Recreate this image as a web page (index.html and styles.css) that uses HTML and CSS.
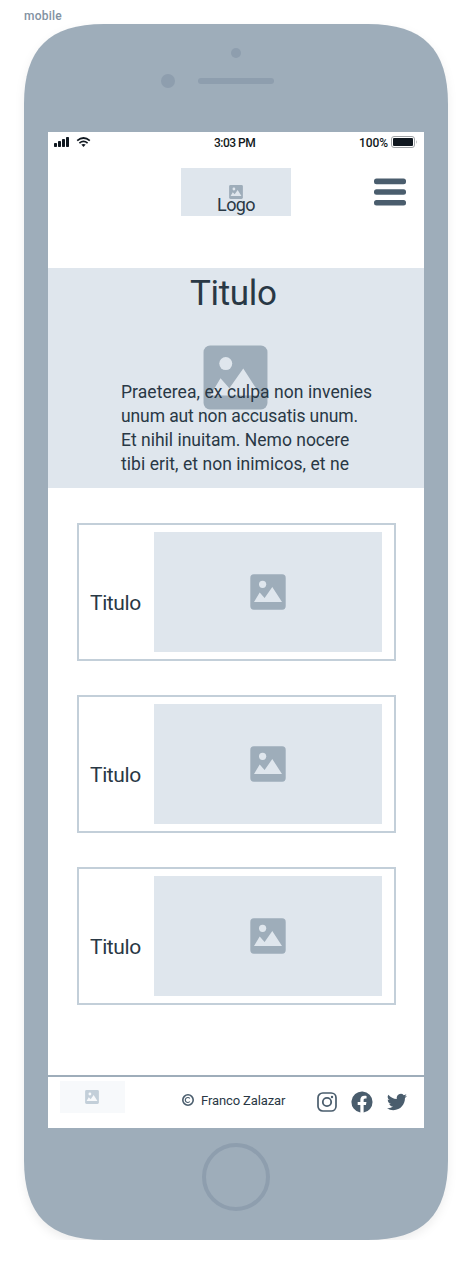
FILE: index.html
```
<!DOCTYPE html>
<html lang="es">
<head>
<meta charset="utf-8">
<title>mobile</title>
<link rel="stylesheet" href="styles.css">
</head>
<body>
<svg class="defs" width="0" height="0" aria-hidden="true">
  <symbol id="picture" viewBox="0 0 36 36">
    <rect x=".3" y=".3" width="35.4" height="35.4" rx="3.6" fill="currentColor"/>
    <circle cx="12.6" cy="10.3" r="3.6" class="cut"/>
    <path d="M4 28 9.7 18.4 14.6 24 22.3 13 32 28Z" class="cut"/>
  </symbol>
</svg>
<div class="caption">mobile</div>
<div class="phone">
  <svg class="shell" viewBox="0 0 424 1216"><path d="M0 80C0 25 25 0 80 0H344C399 0 424 25 424 80V1136C424 1191 399 1216 344 1216H80C25 1216 0 1191 0 1136Z" fill="#9eadba"/></svg>
  <div class="top">
    <svg width="424" height="108" fill="#8e9eae"><circle cx="212" cy="29" r="5"/><circle cx="144" cy="57" r="7"/><rect x="174" y="54" width="76" height="6" rx="3"/></svg>
  </div>
  <main class="screen">
    <div class="status">
      <svg class="signal" width="38" height="12" fill="#101820">
        <rect x="0" y="6" width="3" height="4" rx=".7"/><rect x="4" y="4" width="3" height="6" rx=".7"/><rect x="8" y="2" width="3" height="8" rx=".7"/><rect x="12" y="0" width="3" height="10" rx=".7"/>
        <g fill="none" stroke="#101820" stroke-width="1.7"><path d="M23.2 3.7Q29.5-1.7 35.8 3.7M25.4 6.1Q29.5 2.7 33.6 6.1"/></g><path d="M27.3 7.6Q29.5 6.2 31.7 7.6L29.5 10Z"/>
      </svg>
      <span class="time">3:03 PM</span>
      <span class="power"><span class="pct">100%</span><svg width="27" height="12"><rect x=".5" y=".5" width="23" height="11" rx="2.5" fill="none" stroke="#9fa3a6"/><rect x="2" y="2" width="20" height="8" rx="1" fill="#101820"/><path d="M25 4Q26.5 6 25 8Z" fill="#9fa3a6"/></svg></span>
    </div>
    <header class="header">
      <div class="logo"><svg width="14" height="14"><use href="#picture"/></svg><span>Logo</span></div>
      <svg class="menu" width="32" height="28" fill="#4a5d6d"><rect y=".6" width="32" height="5.6" rx="2.5"/><rect y="11.2" width="32" height="5.6" rx="2.5"/><rect y="22" width="32" height="5.6" rx="2.5"/></svg>
    </header>
    <section class="hero">
      <svg class="hero-picture" width="65" height="65"><use href="#picture"/></svg>
      <h1>Titulo</h1>
      <p><span class="l1">Praeterea, ex culpa non invenies</span><span class="l2">unum aut non accusatis unum.</span><span class="l3">Et nihil inuitam. Nemo nocere</span><span class="l4">tibi erit, et non inimicos, et ne</span></p>
    </section>
    <section class="cards">
      <article class="card"><h2>Titulo</h2><div class="media"><svg width="36" height="36"><use href="#picture"/></svg></div></article>
      <article class="card"><h2>Titulo</h2><div class="media"><svg width="36" height="36"><use href="#picture"/></svg></div></article>
      <article class="card"><h2>Titulo</h2><div class="media"><svg width="36" height="36"><use href="#picture"/></svg></div></article>
    </section>
    <footer class="footer">
      <div class="brand"><svg width="14" height="14"><use href="#picture"/></svg></div>
      <svg class="copy" width="12" height="12" fill="none" stroke="#4a5d6d"><circle cx="6" cy="6" r="5.2" stroke-width="1.6"/><path d="M7.8 4.5A2.5 2.5 0 1 0 7.8 7.5" stroke-width="1.2"/></svg>
      <span class="owner">Franco Zalazar</span>
      <div class="social">
        <svg width="20" height="20" fill="none" stroke="#4a5d6d"><rect x="1" y="1" width="18" height="18" rx="4.8" stroke-width="1.7"/><circle cx="10" cy="10" r="4.2" stroke-width="1.8"/><circle cx="15" cy="5" r="1.2" fill="#4a5d6d" stroke="none"/></svg>
        <svg width="22" height="22" viewBox="0 0 24 24" fill="#4a5d6d"><path d="M23.5 12.07A11.5 11.5 0 1 0 10.2 23.43v-8.16H7.3v-3.2h2.9V9.64c0-2.77 1.7-4.5 4.3-4.5 1.2 0 2.46.22 2.46.22v2.73h-1.39c-1.37 0-1.79.85-1.79 1.73v2.25h3.05l-.49 3.2h-2.56v8.16A11.5 11.5 0 0 0 23.5 12.07Z"/></svg>
        <svg width="20" height="20" viewBox="0 0 24 24" fill="#4a5d6d"><path d="M23.95 4.57a10 10 0 0 1-2.82.77 4.96 4.96 0 0 0 2.16-2.72c-.95.55-2 .95-3.13 1.18a4.92 4.92 0 0 0-8.38 4.48A13.9 13.9 0 0 1 1.64 3.16a4.92 4.92 0 0 0 1.52 6.57 4.9 4.9 0 0 1-2.23-.61v.06a4.92 4.92 0 0 0 3.95 4.83 5 5 0 0 1-2.21.08 4.94 4.94 0 0 0 4.6 3.42A9.87 9.87 0 0 1 0 19.54a13.94 13.94 0 0 0 7.55 2.21c9.05 0 14-7.5 14-13.98l-.02-.64a9.9 9.9 0 0 0 2.42-2.56Z"/></svg>
      </div>
    </footer>
  </main>
  <div class="home"><span></span></div>
</div>
</body>
</html>
```
FILE: styles.css
```
* { box-sizing: border-box; }
body { margin: 0; background: #fff; color: #293845; font-family: Roboto, "Liberation Sans", sans-serif; }
svg { display: block; flex: none; }
.defs { position: absolute; }
h1, h2, p { margin: 0; font-weight: 400; }
.cut { fill: var(--cut, #dfe6ed); }
.caption { height: 24px; padding: 8px 0 0 24px; font-size: 12px; line-height: 16px; font-weight: 500; color: #8292a2; letter-spacing: .25px; }
.phone { position: relative; width: 424px; height: 1216px; margin: 0 24px; }
.shell { position: absolute; inset: 0; z-index: -1; width: 424px; height: 1216px; overflow: visible; filter: drop-shadow(0 4px 5px rgba(0, 0, 0, .07)); }
.top { height: 108px; }
.screen { display: flex; flex-direction: column; width: 376px; height: 996px; margin: 0 24px; background: #fff; }
.status { display: flex; align-items: flex-start; height: 36px; padding: 4px 6px 0; color: #101820; font-size: 12px; line-height: 13px; font-weight: 500; }
.signal { margin-top: 1px; }
.time { width: 145px; margin-left: 122px; padding-top: 1px; letter-spacing: -.5px; }
.power { display: flex; gap: 3px; width: 59px; }
.pct { flex: none; width: 29px; padding-top: 1px; letter-spacing: -.1px; }
.header { display: flex; height: 100px; padding-left: 133px; }
.logo { display: flex; flex-direction: column; align-items: center; width: 110px; height: 48px; padding-top: 17px; background: #dfe6ed; color: #9eadba; }
.logo span { margin-top: -5px; color: #293845; font-size: 18px; line-height: 22px; letter-spacing: -.6px; }
.menu { margin: 10px 0 0 83px; }
.hero { position: relative; height: 220px; background: #dfe6ed; }
.hero-picture { position: absolute; left: 155px; top: 77px; color: #9eadba; }
.hero h1 { position: relative; padding: 5px 0 0 142px; font-size: 35px; line-height: 42px; letter-spacing: -.35px; }
.hero p { position: relative; display: flex; flex-direction: column; padding: 65px 0 0 73px; font-size: 17.5px; line-height: 24px; white-space: nowrap; }
.hero p span { align-self: flex-start; }
.l1 { letter-spacing: .06px; }
.l2 { letter-spacing: -.1px; }
.l4 { letter-spacing: .05px; }
.cards { display: flex; flex-direction: column; gap: 34px; padding: 35px 28px 0 29px; }
.card { display: flex; height: 138px; padding: 7px 12px 7px 11px; border: 2px solid #c3cfd9; }
.card h2 { width: 64px; padding-top: 59px; font-size: 21px; line-height: 24px; letter-spacing: -.4px; }
.media { display: flex; align-items: center; justify-content: center; width: 228px; height: 120px; background: #dfe6ed; color: #9eadba; }
.footer { display: flex; height: 53px; margin-top: auto; padding-left: 12px; border-top: 2px solid #9eadba; }
.brand { --cut: #f7f9fb; display: flex; align-items: center; justify-content: center; width: 65px; height: 32px; margin-top: 4px; background: #f7f9fb; color: #c3cfd9; }
.brand svg { margin-right: 1px; }
.copy { margin: 17px 0 0 57px; }
.owner { width: 122.5px; padding: 16px 0 0 7px; font-size: 13px; line-height: 16px; letter-spacing: -.12px; white-space: nowrap; }
.social { display: flex; align-items: center; gap: 14px; height: 50px; }
.home { display: flex; justify-content: center; padding-top: 15px; }
.home span { width: 68px; height: 68px; border: 4px solid #8e9eae; border-radius: 50%; }
```
